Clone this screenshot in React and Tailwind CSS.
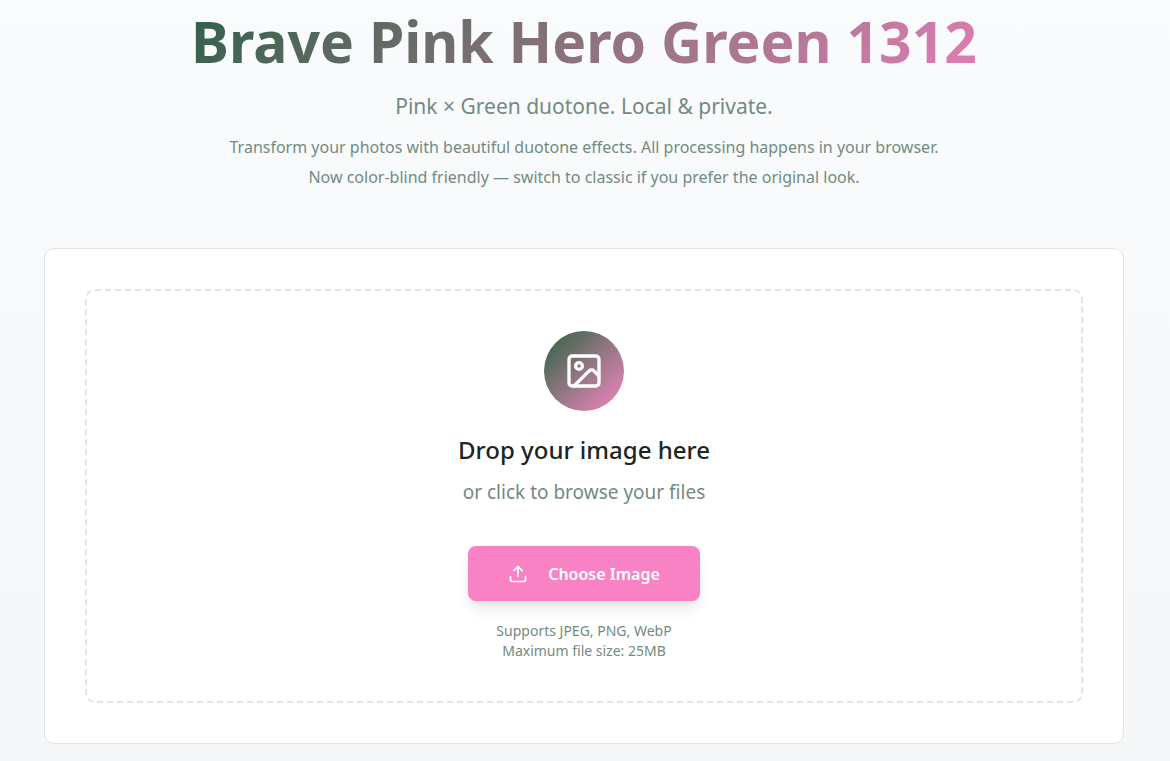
import React, { useRef, useState } from 'react';

const ImageIcon = () => (
    <svg className="size-10" viewBox="0 0 24 24" fill="none" stroke="currentColor" strokeWidth="2" strokeLinecap="round" strokeLinejoin="round" aria-hidden="true">
        <rect width="18" height="18" x="3" y="3" rx="2" ry="2" />
        <circle cx="9" cy="9" r="2" />
        <path d="m21 15-3.086-3.086a2 2 0 0 0-2.828 0L6 21" />
    </svg>
);

const UploadIcon = () => (
    <svg className="size-5" viewBox="0 0 24 24" fill="none" stroke="currentColor" strokeWidth="2" strokeLinecap="round" strokeLinejoin="round" aria-hidden="true">
        <path d="M21 15v4a2 2 0 0 1-2 2H5a2 2 0 0 1-2-2v-4" />
        <path d="m17 8-5-5-5 5" />
        <path d="M12 3v12" />
    </svg>
);

const Header = () => (
    <header className="text-center text-[#738a82]">
        <h1 className="mx-auto w-fit bg-linear-135 from-[#2b6048] to-[#e27db6] bg-clip-text pt-1 pb-3 text-[57px] leading-[75px] font-bold text-transparent">
            Brave Pink Hero Green 1312
        </h1>
        <p className="text-[21px] leading-[30px]">Pink × Green duotone. Local &amp; private.</p>
        <p className="mt-[11px] text-[16px] leading-[30px]">
            Transform your photos with beautiful duotone effects. All processing happens in your browser.
            <br />
            Now color-blind friendly — switch to classic if you prefer the original look.
        </p>
    </header>
);

const DropZone = () => {
    const inputRef = useRef(null);
    const [file, setFile] = useState(null);

    const handleDrop = (e) => {
        e.preventDefault();
        setFile(e.dataTransfer.files[0]);
    };

    return (
        <section
            onDragOver={(e) => e.preventDefault()}
            onDrop={handleDrop}
            className="flex flex-col items-center rounded-[10px] border-2 border-dashed border-[#e1e5e8] p-10 text-center text-[#738a82]"
        >
            <div className="flex size-20 items-center justify-center rounded-full bg-linear-135 from-[#1f5f42] to-[#f784c5] text-white">
                <ImageIcon />
            </div>
            <h3 className="mt-5 text-[24px] leading-[38px] font-medium text-[#1b2624]">
                {file ? file.name : 'Drop your image here'}
            </h3>
            <label htmlFor="photo" className="mt-2 cursor-pointer text-[19px] leading-[30px]">
                or click to browse your files
            </label>

            <input
                ref={inputRef}
                id="photo"
                type="file"
                accept="image/jpeg,image/png,image/webp"
                className="hidden"
                onChange={(e) => setFile(e.target.files[0])}
            />
            <button
                type="button"
                onClick={() => inputRef.current.click()}
                className="mt-[39px] flex h-[55px] cursor-pointer items-center gap-5 rounded-lg bg-[#f982c5] px-10 text-[16px] font-semibold text-white shadow-lg"
            >
                <UploadIcon />
                Choose Image
            </button>

            <p className="mt-5 text-[14px] leading-5">
                Supports JPEG, PNG, WebP
                <br />
                Maximum file size: 25MB
            </p>
        </section>
    );
};

export default function App() {
    return (
        <div className="min-h-screen bg-linear-to-b from-[#fafbfd] to-[#f4f6f8] pr-0.5 font-['Noto_Sans',sans-serif]">
            <main className="px-11 pb-4">
                <Header />
                <div className="mt-14 rounded-[10px] border border-[#e1e5e8] bg-white p-10">
                    <DropZone />
                </div>
            </main>
        </div>
    );
}
